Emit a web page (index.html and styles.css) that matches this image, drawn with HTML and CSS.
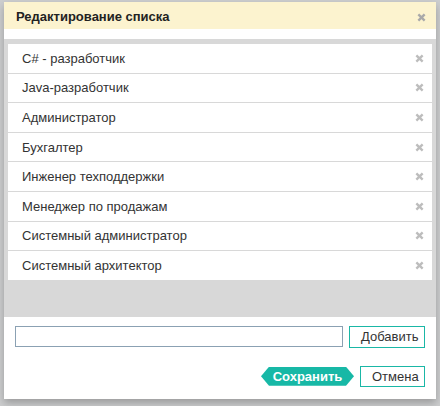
FILE: index.html
```html
<!DOCTYPE html>
<html>
<head>
<meta charset="utf-8">
<link rel="stylesheet" href="styles.css">
</head>
<body>
<div class="modal">
  <div class="header">
    <span class="title">Редактирование списка</span>
    <svg class="x hx" viewBox="0 0 10 10"><path d="M1.5 1.5L8.5 8.5M8.5 1.5L1.5 8.5"/></svg>
  </div>
  <div class="spacer"></div>
  <div class="list-area">
    <ul class="list">
      <li class="item"><span>C# - разработчик</span><svg class="x" viewBox="0 0 10 10"><path d="M1.5 1.5L8.5 8.5M8.5 1.5L1.5 8.5"/></svg></li>
      <li class="item"><span>Java-разработчик</span><svg class="x" viewBox="0 0 10 10"><path d="M1.5 1.5L8.5 8.5M8.5 1.5L1.5 8.5"/></svg></li>
      <li class="item"><span>Администратор</span><svg class="x" viewBox="0 0 10 10"><path d="M1.5 1.5L8.5 8.5M8.5 1.5L1.5 8.5"/></svg></li>
      <li class="item"><span>Бухгалтер</span><svg class="x" viewBox="0 0 10 10"><path d="M1.5 1.5L8.5 8.5M8.5 1.5L1.5 8.5"/></svg></li>
      <li class="item"><span>Инженер техподдержки</span><svg class="x" viewBox="0 0 10 10"><path d="M1.5 1.5L8.5 8.5M8.5 1.5L1.5 8.5"/></svg></li>
      <li class="item"><span>Менеджер по продажам</span><svg class="x" viewBox="0 0 10 10"><path d="M1.5 1.5L8.5 8.5M8.5 1.5L1.5 8.5"/></svg></li>
      <li class="item"><span>Системный администратор</span><svg class="x" viewBox="0 0 10 10"><path d="M1.5 1.5L8.5 8.5M8.5 1.5L1.5 8.5"/></svg></li>
      <li class="item"><span>Системный архитектор</span><svg class="x" viewBox="0 0 10 10"><path d="M1.5 1.5L8.5 8.5M8.5 1.5L1.5 8.5"/></svg></li>
    </ul>
  </div>
  <div class="footer">
    <div class="add-row">
      <input class="field" type="text">
      <button class="btn">Добавить</button>
    </div>
    <div class="actions">
      <button class="save">Сохранить</button>
      <button class="btn cancel">Отмена</button>
    </div>
  </div>
</div>
</body>
</html>
```
FILE: styles.css
```css
html, body {
  margin: 0;
  padding: 0;
}
body {
  background: #cdcecf;
  font-family: "Liberation Sans", Arial, sans-serif;
  font-size: 13px;
  color: #333;
  height: 406px;
  overflow: hidden;
}
.modal {
  margin: 2px 4px 0 4px;
  width: 432px;
  background: #fff;
  box-shadow: 0 4px 8px rgba(0,0,0,0.25);
}
.header {
  height: 27px;
  background: #fcf3cf;
  display: flex;
  align-items: center;
  justify-content: space-between;
  padding: 0 10px 0 12px;
}
.title {
  font-weight: bold;
  font-size: 13px;
  color: #222;
  padding-top: 1px;
}
.x {
  width: 9px;
  height: 9px;
  fill: none;
  stroke: #bdbdbd;
  stroke-width: 2.6;
}
.hx {
  stroke: #a9a9a9;
  margin-top: 3px;
}
.spacer {
  height: 10px;
}
.list-area {
  background: #d8d8d8;
  padding: 5px 4px 37px 4px;
}
.list {
  list-style: none;
  margin: 0;
  padding: 0;
  background: #fff;
}
.item {
  height: 28.6px;
  border-bottom: 1px solid #d8d8d8;
  display: flex;
  align-items: center;
  justify-content: space-between;
  padding: 0 8px 0 14px;
  box-sizing: content-box;
}
.item:last-child {
  border-bottom: none;
}
.footer {
  padding: 9px 11px 12px 11px;
}
.add-row {
  display: flex;
  align-items: center;
  gap: 6px;
}
.field {
  flex: 1;
  height: 21px;
  box-sizing: border-box;
  border: 1px solid #8ba1b3;
  margin: 0;
  padding: 0 4px;
  font-family: inherit;
  font-size: 13px;
}
.btn {
  height: 22px;
  box-sizing: border-box;
  border: 1px solid #1ab7a6;
  background: #fff;
  color: #333;
  font-family: inherit;
  font-size: 13px;
  padding: 0 11px;
  margin: 0;
}
.add-row .btn {
  width: 76px;
}
.actions {
  display: flex;
  justify-content: flex-end;
  align-items: center;
  gap: 6px;
  margin-top: 18px;
}
.save {
  width: 93px;
  height: 19px;
  border: none;
  margin: 0;
  background: #17b8a6;
  color: #fff;
  font-family: inherit;
  font-size: 13px;
  font-weight: bold;
  padding: 0;
  clip-path: polygon(8px 0, calc(100% - 8px) 0, 100% 50%, calc(100% - 8px) 100%, 8px 100%, 0 50%);
}
.cancel {
  width: 65px;
  height: 21px;
}
```
